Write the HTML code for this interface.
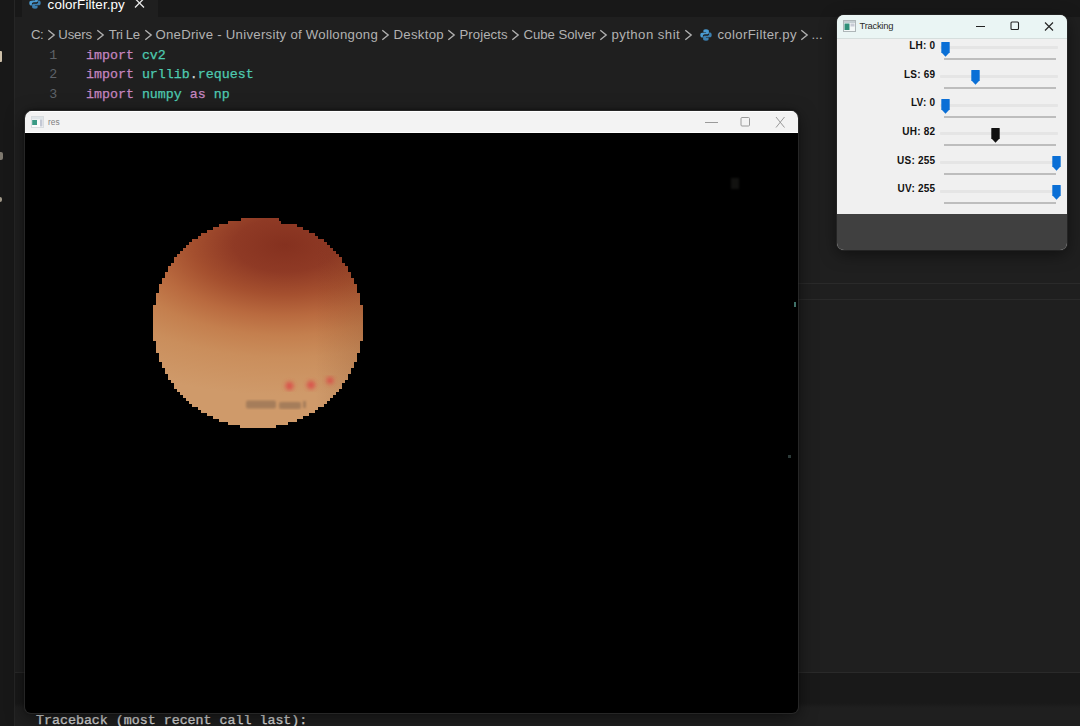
<!DOCTYPE html>
<html><head><meta charset="utf-8"><title>colorFilter.py</title>
<style>
html,body{margin:0;padding:0;}
body{width:1080px;height:726px;overflow:hidden;background:#1f1f1f;position:relative;font-family:"Liberation Sans",sans-serif;}
.abs{position:absolute;}
#act{position:absolute;left:0;top:0;width:14px;height:726px;background:#181818;border-right:1px solid #262626;}
#tabbar{position:absolute;left:15px;top:0;width:1065px;height:17px;background:#181818;}
#tab{position:absolute;left:22px;top:0;width:136px;height:18px;background:#1f1f1f;}
#tabtxt{position:absolute;left:47.6px;top:-2.9px;font-size:13.4px;line-height:16px;color:#fff;white-space:nowrap;letter-spacing:0.1px;}
.bt{position:absolute;top:26.7px;font-size:13.2px;line-height:16px;color:#b2b2b2;white-space:nowrap;letter-spacing:-0.3px;}
.chev{position:absolute;top:28.9px;}
.code{position:absolute;left:86px;font-family:"Liberation Mono",monospace;font-size:13.3px;line-height:19.5px;white-space:pre;color:#d4d4d4;-webkit-text-stroke:0.25px;}
.ln{position:absolute;left:39.3px;width:18px;text-align:right;font-family:"Liberation Mono",monospace;font-size:13.3px;line-height:19.5px;color:#5e6268;}
.k{color:#c586c0} .m{color:#4ec9b0}
#res{position:absolute;left:25px;top:110.5px;width:772.5px;height:602px;border-radius:7px 7px 6px 6px;background:#000;overflow:hidden;box-shadow:0 0 0 1px rgba(56,56,56,.55),0 -1px 3px rgba(0,0,0,.55),0 4px 18px rgba(0,0,0,.55);}
#restitle{position:absolute;left:0;top:0;right:0;height:22.5px;background:#f3f3f3;border-top:1px solid #fff;border-bottom:1px solid #fff;box-sizing:border-box}
#trk{position:absolute;left:837px;top:15px;width:230px;height:234.500px;border-radius:7px;background:#f0f0f0;overflow:hidden;box-shadow:0 0 0 1px rgba(50,50,50,.5),0 4px 16px rgba(0,0,0,.5);}
#trktitle{position:absolute;left:0;top:0;right:0;height:22.5px;background:#eaf5f4;border-bottom:1px solid #d6dedd}
#trkdark{position:absolute;left:0;top:199px;right:0;bottom:0;background:#404040;}
.lab{position:absolute;left:837px;width:98.3px;text-align:right;font-weight:bold;font-size:10px;line-height:12px;color:#111;letter-spacing:.22px;white-space:nowrap;}
.trk{position:absolute;left:940px;width:118px;height:3px;background:#e5e5e5;border-radius:1px;}
.tick{position:absolute;left:944px;width:112px;height:2px;background:#bdbdbd;}
.thumb{position:absolute;}
#term{position:absolute;left:36px;top:711.2px;font-family:"Liberation Mono",monospace;font-size:13.3px;line-height:19px;color:#e2e2e2;white-space:pre;-webkit-text-stroke:0.25px #e2e2e2;}
#band{position:absolute;left:15px;top:672px;width:1065px;height:36px;background:linear-gradient(#2a2a2a 0,#2a2a2a 1px,#191919 1.5px,#191919 31px,#1f1f1f 36px);}
</style></head><body>
<div id="act"></div>
<div id="tabbar"></div>
<div class="abs" style="left:0;top:51px;width:2px;height:11px;background:#cdbfa8;border-radius:0 1px 1px 0;filter:blur(.4px)"></div>
<div class="abs" style="left:0;top:152px;width:2.500px;height:8px;background:#7e786e;border-radius:0 2px 2px 0;filter:blur(.5px)"></div>
<div class="abs" style="left:0;top:197px;width:2px;height:5px;background:#a09888;border-radius:0 2px 2px 0;filter:blur(.5px)"></div>
<div id="tab"></div>
<svg class="abs" style="left:29px;top:-3px" width="12" height="12" viewBox="0 0 12 12"><path d="M6 0.3C3.6 0.3 3.4 1.2 3.4 2v1.2h2.7v.5H2C1 3.7.3 4.6.3 6s.6 2.4 1.5 2.4h1.1V7c0-1 .9-1.8 1.9-1.8h2.7c.8 0 1.4-.6 1.4-1.4V2C8.900 1.100 8 .3 6 .3z" fill="#4b9cd3"/><path d="M6 11.700c2.400 0 2.600-.9 2.600-1.700V8.800H5.900v-.5H10c1 0 1.700-.9 1.700-2.300S11.100 3.600 10.200 3.600H9.100V5c0 1-.9 1.800-1.900 1.800H4.500c-.8 0-1.400.6-1.400 1.400V10c0 .9.900 1.700 2.900 1.700z" fill="#3b7fb0"/></svg>
<div id="tabtxt">colorFilter.py</div>
<svg class="abs" style="left:134px;top:-2px" width="11" height="11" viewBox="0 0 11 11"><path d="M1 0.500L10 9.500M10 0.500L1 9.500" stroke="#e8e8e8" stroke-width="1.3" fill="none"/></svg>
<span class="bt" id="b0" style="left:31.1px;letter-spacing:-0.7px">C:</span><svg class="chev" style="left:47.0px" width="9" height="12" viewBox="0 0 9 12"><polyline points="1.3,1.2 7.2,6 1.3,10.8" fill="none" stroke="#b0b0b0" stroke-width="1.35"/></svg><span class="bt" id="b2" style="left:58.3px;letter-spacing:-0.175px">Users</span><svg class="chev" style="left:96.2px" width="9" height="12" viewBox="0 0 9 12"><polyline points="1.3,1.2 7.2,6 1.3,10.8" fill="none" stroke="#b0b0b0" stroke-width="1.35"/></svg><span class="bt" id="b4" style="left:108.8px;letter-spacing:-0.4px">Tri Le</span><svg class="chev" style="left:143.8px" width="9" height="12" viewBox="0 0 9 12"><polyline points="1.3,1.2 7.2,6 1.3,10.8" fill="none" stroke="#b0b0b0" stroke-width="1.35"/></svg><span class="bt" id="b6" style="left:155.4px;letter-spacing:0.274px">OneDrive - University of Wollongong</span><svg class="chev" style="left:381.0px" width="9" height="12" viewBox="0 0 9 12"><polyline points="1.3,1.2 7.2,6 1.3,10.8" fill="none" stroke="#b0b0b0" stroke-width="1.35"/></svg><span class="bt" id="b8" style="left:393.4px;letter-spacing:0.317px">Desktop</span><svg class="chev" style="left:447.0px" width="9" height="12" viewBox="0 0 9 12"><polyline points="1.3,1.2 7.2,6 1.3,10.8" fill="none" stroke="#b0b0b0" stroke-width="1.35"/></svg><span class="bt" id="b10" style="left:459.4px;letter-spacing:0.086px">Projects</span><svg class="chev" style="left:511.0px" width="9" height="12" viewBox="0 0 9 12"><polyline points="1.3,1.2 7.2,6 1.3,10.8" fill="none" stroke="#b0b0b0" stroke-width="1.35"/></svg><span class="bt" id="b12" style="left:523.4px;letter-spacing:-0.03px">Cube Solver</span><svg class="chev" style="left:599.0px" width="9" height="12" viewBox="0 0 9 12"><polyline points="1.3,1.2 7.2,6 1.3,10.8" fill="none" stroke="#b0b0b0" stroke-width="1.35"/></svg><span class="bt" id="b14" style="left:611.4px;letter-spacing:0.45px">python shit</span><svg class="chev" style="left:684.0px" width="9" height="12" viewBox="0 0 9 12"><polyline points="1.3,1.2 7.2,6 1.3,10.8" fill="none" stroke="#b0b0b0" stroke-width="1.35"/></svg><span class="bt" id="b16" style="left:717.4px;letter-spacing:0.346px">colorFilter.py</span><svg class="chev" style="left:800.0px" width="9" height="12" viewBox="0 0 9 12"><polyline points="1.3,1.2 7.2,6 1.3,10.8" fill="none" stroke="#b0b0b0" stroke-width="1.35"/></svg><span class="bt" id="b18" style="left:811.4px;letter-spacing:0.15px">...</span>
<svg class="abs" style="left:700px;top:28.500px" width="12" height="12" viewBox="0 0 12 12"><path d="M6 0.3C3.6 0.3 3.4 1.2 3.4 2v1.2h2.7v.5H2C1 3.7.3 4.6.3 6s.6 2.4 1.5 2.4h1.1V7c0-1 .9-1.800 1.900-1.800h2.700c.8 0 1.400-.6 1.400-1.400V2C8.900 1.100 8 .3 6 .3z" fill="#4b9cd3"/><path d="M6 11.700c2.400 0 2.600-.9 2.600-1.700V8.800H5.900v-.5H10c1 0 1.700-.9 1.700-2.300S11.100 3.600 10.200 3.600H9.100V5c0 1-.9 1.800-1.900 1.800H4.500c-.8 0-1.400.6-1.400 1.400V10c0 .9.900 1.700 2.900 1.700z" fill="#3b7fb0"/></svg>
<div class="ln" style="top:45.500px">1</div><div class="ln" style="top:65px">2</div><div class="ln" style="top:84.500px">3</div>
<div class="code" style="top:45.500px"><span class="k">import</span> <span class="m">cv2</span></div>
<div class="code" style="top:65px"><span class="k">import</span> <span class="m">urllib</span>.<span class="m">request</span></div>
<div class="code" style="top:84.500px"><span class="k">import</span> <span class="m">numpy</span> <span class="k">as</span> <span class="m">np</span></div>
<div class="abs" style="left:797px;top:283px;width:283px;height:1px;background:#2a2a2a"></div>
<div class="abs" style="left:797px;top:299px;width:283px;height:1px;background:#2a2a2a"></div>
<div id="band"></div>
<div id="term">Traceback (most recent call last):</div>

<div id="res">
 <svg class="abs" style="left:-25px;top:-110.500px" width="1080" height="726" viewBox="0 0 1080 726">
  <defs>
   <clipPath id="bc"><rect x="241" y="218" width="38" height="3"/><rect x="228" y="221" width="53" height="3"/><rect x="219" y="224" width="78" height="3"/><rect x="213" y="227" width="90" height="3"/><rect x="207" y="230" width="102" height="3"/><rect x="201" y="233" width="114" height="3"/><rect x="198" y="236" width="120" height="3"/><rect x="192" y="239" width="132" height="3"/><rect x="189" y="242" width="138" height="3"/><rect x="186" y="245" width="144" height="3"/><rect x="183" y="248" width="150" height="3"/><rect x="180" y="251" width="156" height="3"/><rect x="177" y="254" width="162" height="3"/><rect x="174" y="257" width="168" height="3"/><rect x="174" y="260" width="168" height="3"/><rect x="171" y="263" width="174" height="3"/><rect x="168" y="266" width="180" height="3"/><rect x="168" y="269" width="180" height="3"/><rect x="165" y="272" width="186" height="3"/><rect x="165" y="275" width="186" height="3"/><rect x="162" y="278" width="192" height="3"/><rect x="162" y="281" width="192" height="3"/><rect x="159" y="284" width="198" height="3"/><rect x="159" y="287" width="198" height="3"/><rect x="159" y="290" width="198" height="3"/><rect x="156" y="293" width="204" height="3"/><rect x="156" y="296" width="204" height="3"/><rect x="156" y="299" width="204" height="3"/><rect x="156" y="302" width="204" height="3"/><rect x="153" y="305" width="210" height="3"/><rect x="153" y="308" width="210" height="3"/><rect x="153" y="311" width="210" height="3"/><rect x="153" y="314" width="210" height="3"/><rect x="153" y="317" width="210" height="3"/><rect x="153" y="320" width="210" height="3"/><rect x="153" y="323" width="210" height="3"/><rect x="153" y="326" width="210" height="3"/><rect x="153" y="329" width="210" height="3"/><rect x="153" y="332" width="210" height="3"/><rect x="153" y="335" width="210" height="3"/><rect x="153" y="338" width="210" height="3"/><rect x="156" y="341" width="204" height="3"/><rect x="156" y="344" width="204" height="3"/><rect x="156" y="347" width="204" height="3"/><rect x="156" y="350" width="204" height="3"/><rect x="159" y="353" width="198" height="3"/><rect x="159" y="356" width="198" height="3"/><rect x="159" y="359" width="198" height="3"/><rect x="162" y="362" width="192" height="3"/><rect x="162" y="365" width="192" height="3"/><rect x="165" y="368" width="186" height="3"/><rect x="165" y="371" width="186" height="3"/><rect x="168" y="374" width="180" height="3"/><rect x="168" y="377" width="180" height="3"/><rect x="171" y="380" width="174" height="3"/><rect x="174" y="383" width="168" height="3"/><rect x="174" y="386" width="168" height="3"/><rect x="177" y="389" width="162" height="3"/><rect x="180" y="392" width="156" height="3"/><rect x="183" y="395" width="150" height="3"/><rect x="186" y="398" width="144" height="3"/><rect x="189" y="401" width="138" height="3"/><rect x="192" y="404" width="132" height="3"/><rect x="198" y="407" width="120" height="3"/><rect x="201" y="410" width="114" height="3"/><rect x="207" y="413" width="102" height="3"/><rect x="213" y="416" width="90" height="3"/><rect x="219" y="419" width="78" height="3"/><rect x="228" y="422" width="60" height="3"/><rect x="240" y="425" width="36" height="3"/></clipPath>
   <radialGradient id="bg1" gradientUnits="userSpaceOnUse" cx="285" cy="245" r="150" gradientTransform="translate(285 0) scale(1.9 1) translate(-285 0)">
     <stop offset="0" stop-color="#85311f"/><stop offset="0.18" stop-color="#8f3a25"/><stop offset="0.33" stop-color="#a5502f"/>
     <stop offset="0.47" stop-color="#b96a3f"/><stop offset="0.6" stop-color="#c47f4e"/><stop offset="0.75" stop-color="#ca8e5c"/><stop offset="1" stop-color="#cf9a6a"/>
   </radialGradient>
   <linearGradient id="bg2" gradientUnits="userSpaceOnUse" x1="315" y1="0" x2="366" y2="0"><stop offset="0" stop-color="#5a2410" stop-opacity="0"/><stop offset="1" stop-color="#5a2410" stop-opacity=".16"/></linearGradient>
   <filter id="bl2"><feGaussianBlur stdDeviation="1.9"/></filter>
   <filter id="bl3"><feGaussianBlur stdDeviation="1.3"/></filter>
  </defs>
  <g clip-path="url(#bc)">
   <rect x="150" y="215" width="220" height="220" fill="url(#bg1)"/><rect x="150" y="215" width="220" height="220" fill="url(#bg2)"/>
   <g filter="url(#bl2)" fill="#dc4545" opacity=".85"><circle cx="289.500" cy="386" r="4.200"/><circle cx="311" cy="385" r="4.200"/><circle cx="330" cy="380.500" r="3.600"/></g>
   <g filter="url(#bl3)" fill="#5d4b40" opacity=".36"><rect x="246" y="400.500" width="30" height="8" rx="2"/><rect x="279" y="402" width="22" height="7" rx="2"/><rect x="303" y="401" width="3" height="7"/></g>
  </g>
 </svg>
 <div id="restitle"></div>
 <svg class="abs" style="left:6px;top:5px" width="13" height="12" viewBox="0 0 13 12"><rect x=".5" y=".5" width="12" height="11" fill="#fafafa" stroke="#d9dde0"/><rect x="1" y="1" width="11" height="2.500" fill="#dfe5e8"/><rect x="1.200" y="4" width="4.800" height="5" fill="#3a9a84"/><rect x="9" y="3.500" width="2.500" height="7" fill="#c4c8d4"/></svg>
 <div class="abs" style="left:23px;top:6.700px;font-size:8.300px;line-height:11px;color:#808080">res</div>
 <svg class="abs" style="left:670px;top:0" width="100" height="23" viewBox="0 0 100 23"><g stroke="#9a9a9a" stroke-width="1" fill="none"><path d="M10 11.500H23"/><rect x="46" y="6.500" width="8.500" height="8.500" rx="1"/><path d="M81 6l8.500 10.500M89.500 6L81 16.500"/></g></svg>
</div>

<div class="abs" style="left:794px;top:302px;width:2px;height:5px;background:#3f7068;filter:blur(.5px)"></div>
<div class="abs" style="left:788px;top:455px;width:3px;height:3px;background:#2c3a38;filter:blur(.5px)"></div>
<div class="abs" style="left:731px;top:178px;width:8px;height:11px;background:#121210;filter:blur(1px)"></div>
<div id="trk">
 <div id="trktitle"></div>
 <div id="trkdark"></div>
 <svg class="abs" style="left:6px;top:5px" width="13" height="12" viewBox="0 0 13 12"><rect x=".5" y=".5" width="12" height="11" fill="#f4f8f8" stroke="#aeb6b8"/><rect x="1" y="1" width="11" height="2" fill="#c5ced2"/><rect x="1.500" y="3.500" width="5" height="6.500" fill="#2f8f78"/><rect x="7.500" y="3.500" width="4" height="3" fill="#c9ccd6"/></svg>
 <div class="abs" style="left:22.500px;top:5.400px;font-size:9.400px;line-height:12px;color:#2a2a2a;letter-spacing:-.25px">Tracking</div>
 <svg class="abs" style="left:130px;top:0" width="100" height="23" viewBox="0 0 100 23"><g stroke="#222" stroke-width="1.100" fill="none"><path d="M9 11.500H18"/><rect x="44" y="7" width="7.500" height="7.500" rx="1"/><path d="M78 7.500l8 8M86 7.500l-8 8"/></g></svg>
</div>
<div class="lab" style="top:39.8px">LH: 0</div>
<div class="trk" style="top:46.3px"></div>
<div class="tick" style="top:58.3px"></div>
<svg class="thumb" style="left:940.7px;top:41.5px" width="9" height="15" viewBox="0 0 9 15"><path d="M0.3 0.5 Q0.3 0 0.8 0 H8.2 Q8.7 0 8.7 0.5 V10.3 L4.5 14.8 L0.3 10.3 Z" fill="#0a6fd6"/></svg>
<div class="lab" style="top:68.5px">LS: 69</div>
<div class="trk" style="top:75.0px"></div>
<div class="tick" style="top:87.0px"></div>
<svg class="thumb" style="left:971.2px;top:70.2px" width="9" height="15" viewBox="0 0 9 15"><path d="M0.3 0.5 Q0.3 0 0.8 0 H8.2 Q8.7 0 8.7 0.5 V10.3 L4.5 14.8 L0.3 10.3 Z" fill="#0a6fd6"/></svg>
<div class="lab" style="top:97.2px">LV: 0</div>
<div class="trk" style="top:103.7px"></div>
<div class="tick" style="top:115.7px"></div>
<svg class="thumb" style="left:940.7px;top:98.9px" width="9" height="15" viewBox="0 0 9 15"><path d="M0.3 0.5 Q0.3 0 0.8 0 H8.2 Q8.7 0 8.7 0.5 V10.3 L4.5 14.8 L0.3 10.3 Z" fill="#0a6fd6"/></svg>
<div class="lab" style="top:125.9px">UH: 82</div>
<div class="trk" style="top:132.4px"></div>
<div class="tick" style="top:144.4px"></div>
<svg class="thumb" style="left:991.3px;top:127.6px" width="9" height="15" viewBox="0 0 9 15"><path d="M0.3 0.5 Q0.3 0 0.8 0 H8.2 Q8.7 0 8.7 0.5 V10.3 L4.5 14.8 L0.3 10.3 Z" fill="#111"/></svg>
<div class="lab" style="top:154.6px">US: 255</div>
<div class="trk" style="top:161.1px"></div>
<div class="tick" style="top:173.1px"></div>
<svg class="thumb" style="left:1051.5px;top:156.3px" width="9" height="15" viewBox="0 0 9 15"><path d="M0.3 0.5 Q0.3 0 0.8 0 H8.2 Q8.7 0 8.7 0.5 V10.3 L4.5 14.8 L0.3 10.3 Z" fill="#0a6fd6"/></svg>
<div class="lab" style="top:183.3px">UV: 255</div>
<div class="trk" style="top:189.8px"></div>
<div class="tick" style="top:201.8px"></div>
<svg class="thumb" style="left:1051.5px;top:185.0px" width="9" height="15" viewBox="0 0 9 15"><path d="M0.3 0.5 Q0.3 0 0.8 0 H8.2 Q8.7 0 8.7 0.5 V10.3 L4.5 14.8 L0.3 10.3 Z" fill="#0a6fd6"/></svg>

</body></html>
